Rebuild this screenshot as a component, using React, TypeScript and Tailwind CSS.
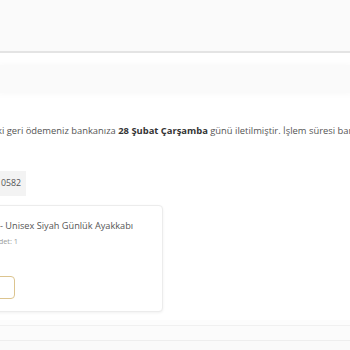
export default function App() {
  return (
    <div
      className="h-[350px] w-[350px] overflow-hidden bg-white text-[#555]"
      style={{ fontFamily: '"Open Sans", "Liberation Sans", sans-serif' }}
    >
      {/* top bar */}
      <div className="h-[53px] border-b-2 border-[#e4e4e4] bg-[#fafafa]" />

      {/* faint sub bar */}
      <div className="mt-[12px] h-[28px] bg-[#fafafa] shadow-[0_0_6px_2px_#fafafa]" />

      {/* refund message */}
      <p className="-ml-[3px] mt-[32px] whitespace-nowrap text-[9.4px] leading-[12px]">
        ki geri ödemeniz bankanıza{" "}
        <b className="font-bold text-[#333]">28 Şubat Çarşamba</b> günü
        iletilmiştir. İşlem süresi bankanıza göre değişiklik gösterebilir.
      </p>

      {/* order no */}
      <div className="mt-[34px] flex h-[25px] w-[26px] items-center justify-end overflow-hidden bg-[#f3f3f3] pr-[5px]">
        <span className="whitespace-nowrap text-[8.8px]">0582</span>
      </div>

      {/* product card */}
      <div className="-ml-[20px] mt-[9px] h-[107px] w-[183px] rounded-[4px] border border-[#ececec] bg-white pl-[19px] pt-[14px] shadow-[0_1px_3px_rgba(0,0,0,0.06)]">
        <div className="whitespace-nowrap text-[9.2px] leading-[12px] text-[#555]">
          - Unisex Siyah Günlük Ayakkabı
        </div>
        <div className="mt-[5px] -ml-[6px] whitespace-nowrap text-[7.4px] leading-[9px] text-[#9a9a9a]">
          Adet: 1
        </div>
        <div className="-ml-[40px] mt-[30px] h-[23px] w-[55px] rounded-[4px] border border-[#dcc48f] bg-white" />
      </div>

      {/* bottom bands */}
      <div className="mt-[8px] h-[5px] bg-[#fcfcfc]" />
      <div className="h-px bg-[#f0f0f0]" />
      <div className="h-[14px] bg-[#fbfbfb]" />
      <div className="h-px bg-[#eeeeee]" />
      <div className="h-[20px] bg-[#fafafa]" />
    </div>
  );
}
